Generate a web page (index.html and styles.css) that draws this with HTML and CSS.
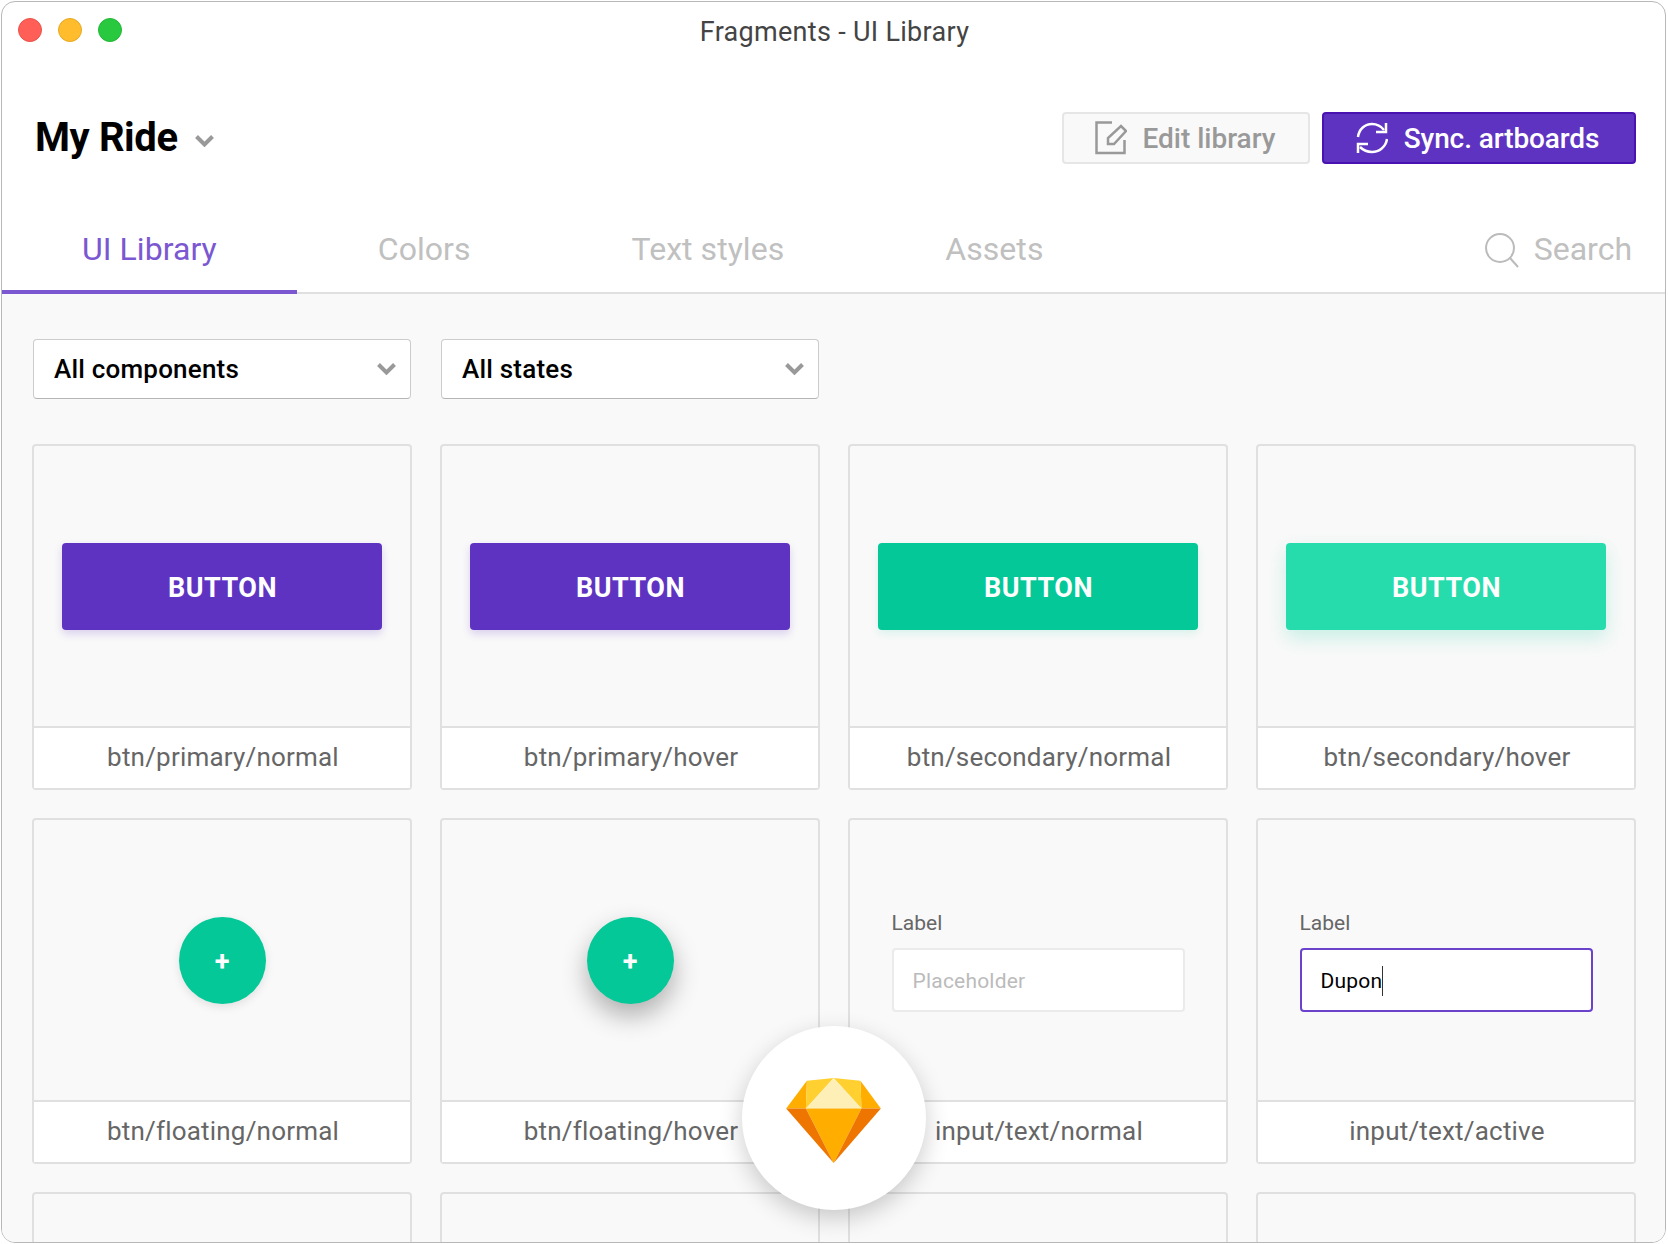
FILE: index.html
```html
<!DOCTYPE html>
<html lang="en">
<head>
<meta charset="utf-8">
<title>Fragments - UI Library</title>
<link rel="stylesheet" href="styles.css">
</head>
<body>
	<div class="window">
		<div class="titlebar">
			<div class="lights">
				<span class="light red"></span>
				<span class="light yellow"></span>
				<span class="light green"></span>
			</div>
			<div class="window-title">Fragments - UI Library</div>
		</div>

		<div class="header">
			<div class="project">
				<span class="project-name">My Ride</span>
				<svg class="chevron" width="19" height="12" viewBox="0 0 19 12"><path d="M1.500 1.500l8 8 8-8" /></svg>
			</div>
			<div class="actions">
				<a class="btn btn-edit" href="#">
					<svg width="32" height="34" viewBox="0 0 32 34" fill="none" stroke="#999" stroke-width="2.500"><path d="M17 1.500H1.500v30.500h28V19" /><path d="M13 23v-6L26 5l5 5-12 13z" /></svg>
					Edit library
				</a>
				<a class="btn btn-sync" href="#">
					<svg width="32" height="32" viewBox="0 0 32 32" fill="none" stroke="#fff" stroke-width="2.500"><path d="M2 15C3 7 9 2 16 2c5 0 9 2 12 6" /><path d="M30 1v9H20" /><path d="M31 17c-1 8-8 13-15 13-5 0-9-2-12-5" /><path d="M2 31v-9h10" /></svg>
					Sync. artboards
				</a>
			</div>
		</div>

		<div class="tabs">
			<a class="tab active" href="#">UI Library</a>
			<a class="tab" href="#">Colors</a>
			<a class="tab" href="#">Text styles</a>
			<a class="tab" href="#">Assets</a>
			<div class="search">
				<svg width="36" height="36" viewBox="0 0 36 36" fill="none" stroke="#bbb" stroke-width="2"><circle cx="15" cy="15" r="14" /><path d="M25 25l8 9" /></svg>
				Search
			</div>
		</div>

		<div class="content">
			<div class="filters">
				<div class="select">All components<svg class="chevron" width="19" height="12" viewBox="0 0 19 12"><path d="M1.500 1.500l8 8 8-8" /></svg></div>
				<div class="select">All states<svg class="chevron" width="19" height="12" viewBox="0 0 19 12"><path d="M1.500 1.500l8 8 8-8" /></svg></div>
			</div>

			<div class="grid">
				<div class="card">
					<div class="preview"><a class="demo-btn primary" href="#">BUTTON</a></div>
					<div class="caption">btn/primary/normal</div>
				</div>
				<div class="card">
					<div class="preview"><a class="demo-btn primary" href="#">BUTTON</a></div>
					<div class="caption">btn/primary/hover</div>
				</div>
				<div class="card">
					<div class="preview"><a class="demo-btn secondary" href="#">BUTTON</a></div>
					<div class="caption">btn/secondary/normal</div>
				</div>
				<div class="card">
					<div class="preview"><a class="demo-btn secondary-hover" href="#">BUTTON</a></div>
					<div class="caption">btn/secondary/hover</div>
				</div>

				<div class="card">
					<div class="preview"><a class="fab" href="#">+</a></div>
					<div class="caption">btn/floating/normal</div>
				</div>
				<div class="card">
					<div class="preview"><a class="fab fab-hover" href="#">+</a></div>
					<div class="caption">btn/floating/hover</div>
				</div>
				<div class="card">
					<div class="preview">
						<div class="field">
							<div class="field-label">Label</div>
							<div class="field-input placeholder">Placeholder</div>
						</div>
					</div>
					<div class="caption">input/text/normal</div>
				</div>
				<div class="card">
					<div class="preview">
						<div class="field">
							<div class="field-label">Label</div>
							<div class="field-input focused">Dupon<span class="cursor"></span></div>
						</div>
					</div>
					<div class="caption">input/text/active</div>
				</div>

				<div class="card"><div class="preview"></div></div>
				<div class="card"><div class="preview"></div></div>
				<div class="card"><div class="preview"></div></div>
				<div class="card"><div class="preview"></div></div>
			</div>
		</div>

		<div class="sketch-badge">
			<svg width="95" height="85" viewBox="258 234 283 254">
				<path fill="#ffae00" d="M258 325l62-83-3 83z" />
				<path fill="#ffae00" d="M541 325l-61-83 3 83z" />
				<path fill="#ffd02f" d="M320 242l80-8-83 91z" />
				<path fill="#ffd02f" d="M480 242l-80-8 83 91z" />
				<path fill="#fdefb6" d="M317 325l83-91 83 91z" />
				<path fill="#ffae00" d="M317 325h166l-83 163z" />
				<path fill="#ee7500" d="M258 325h59l83 163z" />
				<path fill="#ee7500" d="M541 325h-58l-83 163z" />
			</svg>
		</div>
	</div>
</body>
</html>
```
FILE: styles.css
```css
* {
	box-sizing: border-box;
}

body {
	margin: 0;
	background: #fff;
	font-family: "Roboto", "Liberation Sans", sans-serif;
}

a {
	text-decoration: none;
}

.window {
	position: relative;
	width: 1665px;
	height: 1242px;
	margin: 1px 2px 1px 1px;
	border: 1px solid #b8b8b8;
	border-radius: 14px;
	background: #fff;
	overflow: hidden;
}

.titlebar {
	position: relative;
	display: flex;
	justify-content: center;
	align-items: center;
	height: 58px;
	padding: 2px 0 0 2px;
}

.lights {
	position: absolute;
	left: 16px;
	top: 16px;
	display: flex;
	gap: 16px;
}

.light {
	width: 24px;
	height: 24px;
	border-radius: 50%;
}

.red {
	background: #ff5f57;
	border: 1px solid #e8524a;
}

.yellow {
	background: #ffbd2e;
	border: 1px solid #e6a823;
}

.green {
	background: #28c93f;
	border: 1px solid #22b636;
}

.window-title {
	font-size: 27px;
	letter-spacing: 0.300px;
	color: #444;
}

.header {
	display: flex;
	justify-content: space-between;
	align-items: center;
	height: 52px;
	margin-top: 52px;
	padding: 0 29px 0 33px;
}

.project {
	display: flex;
	align-items: center;
	gap: 17px;
}

.project-name {
	margin-top: -2px;
	font-size: 40px;
	font-weight: 700;
	letter-spacing: -0.400px;
	color: #000;
}

.chevron {
	fill: none;
	stroke: #999;
	stroke-width: 4;
}

.project .chevron {
	margin-top: 6px;
}

.actions {
	display: flex;
	gap: 12px;
}

.btn {
	display: flex;
	align-items: center;
	justify-content: center;
	gap: 15px;
	height: 52px;
	border-radius: 4px;
	font-size: 28px;
	font-weight: 500;
}

.btn-edit {
	width: 248px;
	padding-right: 1px;
	border: 2px solid #e6e6e6;
	background: #f9f9f9;
	color: #999;
}

.btn-sync {
	width: 314px;
	gap: 16px;
	padding-right: 3px;
	border: 2px solid #4a12b0;
	background: #5f33c2;
	letter-spacing: -0.100px;
	color: #fff;
}

.tabs {
	display: flex;
	align-items: stretch;
	height: 81px;
	margin-top: 49px;
	border-bottom: 2px solid #e0e0e0;
}

.tab {
	display: flex;
	align-items: center;
	height: 81px;
	padding: 0 80.500px 5px;
	border-bottom: 4px solid transparent;
	font-size: 32px;
	letter-spacing: 0.050px;
	color: #c0c0c0;
}

.tab.active {
	padding: 0 80.500px 5px 80px;
	color: #7b57d1;
	border-bottom-color: #7b57d1;
}

.search {
	display: flex;
	align-items: center;
	gap: 13px;
	margin-left: auto;
	padding: 0 33px 8px 0;
	font-size: 32px;
	color: #c0c0c0;
}

.search svg {
	margin-top: 4px;
}

.content {
	height: 960px;
	padding: 45px 30px 0 31px;
	background: #f9f9f9;
}

.filters {
	display: flex;
	gap: 30px;
}

.select {
	display: flex;
	justify-content: space-between;
	align-items: center;
	width: 378px;
	height: 60px;
	padding: 0 14px 0 20px;
	border: 1px solid #ccc;
	border-bottom-color: #b5b5b5;
	border-radius: 4px;
	background: #fff;
	font-size: 26px;
	font-weight: 500;
	letter-spacing: 0.200px;
	color: #000;
}

.grid {
	display: grid;
	grid-template-columns: repeat(4, 380px);
	grid-auto-rows: 346px;
	gap: 28px;
	margin: 45px 0 0 -1px;
}

.card {
	display: flex;
	flex-direction: column;
	border: 2px solid #e0e0e0;
	border-radius: 4px;
}

.preview {
	display: flex;
	flex: 1;
	justify-content: center;
	align-items: center;
}

.caption {
	height: 62px;
	padding-left: 2px;
	border-top: 2px solid #e0e0e0;
	background: #fff;
	font-size: 26px;
	line-height: 58px;
	text-align: center;
	letter-spacing: 0.200px;
	color: #666;
}

.demo-btn {
	display: flex;
	justify-content: center;
	align-items: center;
	width: 320px;
	height: 87px;
	padding: 3px 0 0 1px;
	border-radius: 4px;
	font-size: 27px;
	font-weight: 700;
	letter-spacing: 0.500px;
	color: #fff;
}

.primary {
	background: #5f33c2;
	box-shadow: 0 4px 8px rgba(95, 51, 194, 0.2);
}

.secondary {
	background: #04c897;
	box-shadow: 0 4px 8px rgba(4, 200, 151, 0.12);
}

.secondary-hover {
	background: #26dbac;
	box-shadow: 0 8px 20px rgba(4, 200, 151, 0.2);
}

.fab {
	display: flex;
	justify-content: center;
	align-items: center;
	width: 87px;
	height: 87px;
	padding-top: 4px;
	border-radius: 50%;
	background: #04c897;
	box-shadow: 0 3px 10px rgba(0, 0, 0, 0.1);
	font-size: 27px;
	font-weight: 700;
	color: #fff;
}

.fab-hover {
	box-shadow: 0 12px 26px rgba(0, 0, 0, 0.3);
}

.field {
	width: 293px;
	margin-top: 3px;
}

.field-label {
	margin-bottom: 13px;
	font-size: 21px;
	color: #666;
}

.field-input {
	display: flex;
	align-items: center;
	height: 64px;
	padding: 2px 19px 0;
	border: 2px solid #ebebeb;
	border-radius: 4px;
	background: #fff;
	font-size: 21px;
	letter-spacing: 0.200px;
	color: #000;
}

.field-input.placeholder {
	color: #bbb;
}

.field-input.focused {
	border-color: #6a42cc;
}

.cursor {
	width: 1px;
	height: 30px;
	background: #333;
}

.sketch-badge {
	position: absolute;
	left: 740px;
	top: 1024px;
	display: flex;
	justify-content: center;
	align-items: center;
	width: 184px;
	height: 184px;
	padding: 5px 2px 0 0;
	border-radius: 50%;
	background: #fff;
	box-shadow: 0 8px 24px rgba(0, 0, 0, 0.2);
}
```
